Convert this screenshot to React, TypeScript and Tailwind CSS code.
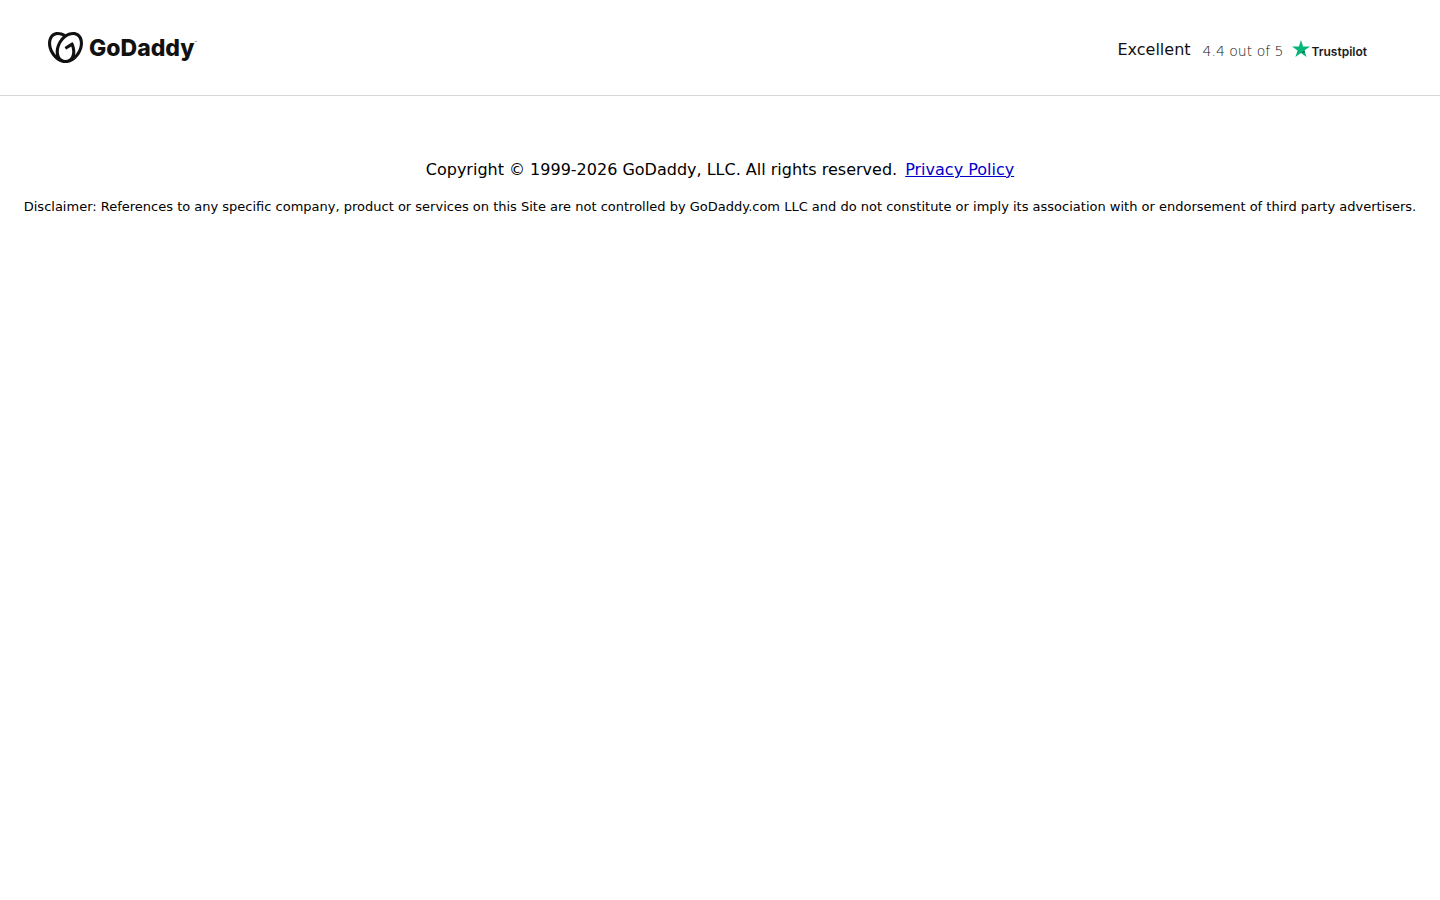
import { SiGodaddy } from "react-icons/si";

function GoDaddyLogo() {
  return (
    <a href="#" aria-label="GoDaddy" className="flex items-center gap-1.5 text-[#111111]">
      <SiGodaddy aria-hidden="true" className="size-[35px]" />
      <span className="flex items-start font-['Inter',sans-serif]">
        <span className="text-[23px] leading-8 font-extrabold">GoDaddy</span>
        <span className="pt-2 text-[4px] leading-[6px]">™</span>
      </span>
    </a>
  );
}

function TrustpilotLogo() {
  return (
    <span className="flex items-center gap-0.5">
      <svg aria-hidden="true" viewBox="0 0 18 17" className="mb-0.5 h-[17px] w-[18px]">
        <path fill="#00b67a" d="M18 6.5h-6.9L9 0 6.9 6.5H0l5.6 4L3.400 17 9 13l5.600 4-2.200-6.500z" />
        <path fill="#005128" d="M12.900 12 12.400 10.500 9 13z" />
      </svg>
      <span className="pt-1 font-['Inter',sans-serif] text-[12px] leading-4 font-semibold text-[#191919]">Trustpilot</span>
    </span>
  );
}

export default function App() {
  return (
    <div className="bg-white font-['DejaVu_Sans',sans-serif] text-black">
      <header className="flex h-24 items-center justify-between border-b border-[#d6d6d6] pr-[73px] pl-12">
        <GoDaddyLogo />
        <div className="flex items-center pt-1">
          <span className="text-base text-[#111111]">Excellent</span>
          <span className="ml-3 pt-0.5 text-sm font-extralight text-[#111111]">4.4 out of 5</span>
          <span className="ml-2">
            <TrustpilotLogo />
          </span>
        </div>
      </header>

      <footer className="px-4 pt-[62px] text-center">
        <p className="text-base">
          Copyright © 1999-2026 GoDaddy, LLC. All rights reserved.
          <a href="#" className="ml-2 text-[#0000cc] underline">
            Privacy Policy
          </a>
        </p>
        <p className="mt-[15px] text-[13px] leading-5">
          Disclaimer: References to any specific company, product or services on this Site are not controlled by GoDaddy.com LLC and do not
          constitute or imply its association with or endorsement of third party advertisers.
        </p>
      </footer>
    </div>
  );
}
